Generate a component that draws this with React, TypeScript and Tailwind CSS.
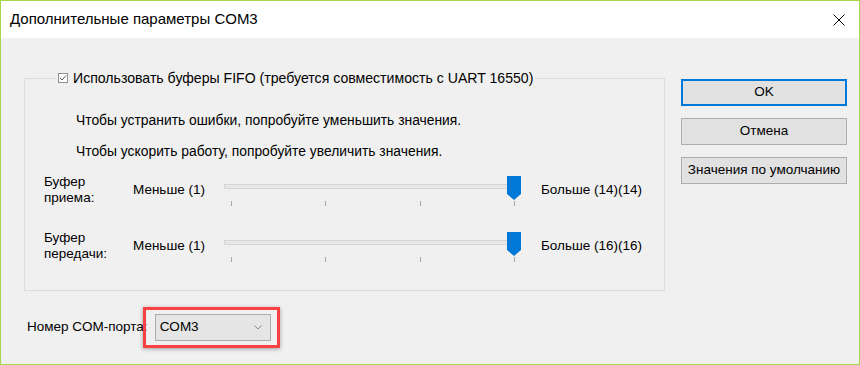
import React from 'react'

const font = { fontFamily: '"Liberation Sans", Arial, sans-serif' }

function Slider() {
  return (
    <svg width="302" height="32" viewBox="0 0 302 32" className="block">
      <rect x="2.5" y="10.5" width="294" height="4" fill="#e7e7e7" stroke="#d6d6d6" />
      {[9, 103, 198, 292].map((x) => (
        <line key={x} x1={x + 0.5} y1="27" x2={x + 0.5} y2="32" stroke="#a8a8a8" />
      ))}
      <polygon points="285,2 299,2 299,20 292,26 285,20" fill="#0078d7" />
    </svg>
  )
}

function BufferRow({ top, bottom, max }: { top: string; bottom: string; max: string }) {
  return (
    <div className="flex items-center h-[32px]">
      <div className="w-[89px] pl-[19px] box-content leading-[16px]">
        <div>{top}</div>
        <div>{bottom}</div>
      </div>
      <div className="w-[89px]">Меньше (1)</div>
      <Slider />
      <div className="ml-[17px]">{max}</div>
    </div>
  )
}

export default function App() {
  return (
    <div
      className="w-[860px] h-[365px] border border-[#a6d64a] bg-[#f0f0f0] text-[13.5px] text-black flex flex-col"
      style={font}
    >
      <div className="h-[37px] bg-white flex items-center justify-between pl-[9px] pr-[14px] shrink-0">
        <span className="text-[15px] text-[#000]">Дополнительные параметры COM3</span>
        <svg width="12" height="12" viewBox="0 0 12 12">
          <path d="M0.5 0.5L11.5 11.5M11.5 0.5L0.5 11.5" stroke="#000" strokeWidth="1" />
        </svg>
      </div>

      <div className="flex flex-1">
        <div className="flex flex-col">
          <fieldset className="ml-[23px] mt-[32px] w-[641px] h-[221px] border border-[#dcdcdc] leading-[16px]">
            <legend className="ml-[31px] px-[2px] flex items-center text-[14.1px]">
              <span className="w-[10px] h-[10px] border border-[#8f8f8f] bg-white flex items-center justify-center mr-[5px]">
                <svg width="8" height="8" viewBox="0 0 8 8">
                  <path d="M1 4L3 6L7 1.5" fill="none" stroke="#555" strokeWidth="1" />
                </svg>
              </span>
              <span>Использовать буферы FIFO (требуется совместимость с UART 16550)</span>
            </legend>
            <div className="pl-[51px] mt-[26px] text-[13.85px]">Чтобы устранить ошибки, попробуйте уменьшить значения.</div>
            <div className="pl-[51px] mt-[15px] text-[13.85px]">Чтобы ускорить работу, попробуйте увеличить значения.</div>
            <div className="mt-[15px]">
              <BufferRow top="Буфер" bottom="приема:" max="Больше (14)(14)" />
            </div>
            <div className="mt-[24px]">
              <BufferRow top="Буфер" bottom="передачи:" max="Больше (16)(16)" />
            </div>
          </fieldset>

          <div className="flex items-center ml-[26px] mt-[16px]">
            <span>Номер COM-порта:</span>
            <div className="-ml-[5px] border-[3px] border-[#f94144] pl-[9px] pr-[6px] py-[4px] shadow-[0_1px_4px_rgba(0,0,0,0.35)]">
              <div className="w-[116px] h-[27px] bg-[#e5e5e5] border border-[#adadad] flex items-center justify-between pl-[4px] pr-[8px]">
                <span>COM3</span>
                <svg width="8" height="5" viewBox="0 0 8 5">
                  <path d="M0.5 0.5L4 4L7.5 0.5" fill="none" stroke="#888" strokeWidth="1" />
                </svg>
              </div>
            </div>
          </div>
        </div>

        <div className="ml-[16px] mt-[41px] flex flex-col gap-[12px] w-[166px]">
          <button className="h-[27px] bg-[#e1e1e1] border border-[#0078d7] shadow-[inset_0_0_0_1px_#0078d7]">OK</button>
          <button className="h-[27px] bg-[#e1e1e1] border border-[#adadad]">Отмена</button>
          <button className="h-[27px] bg-[#e1e1e1] border border-[#adadad]">Значения по умолчанию</button>
        </div>
      </div>
    </div>
  )
}
